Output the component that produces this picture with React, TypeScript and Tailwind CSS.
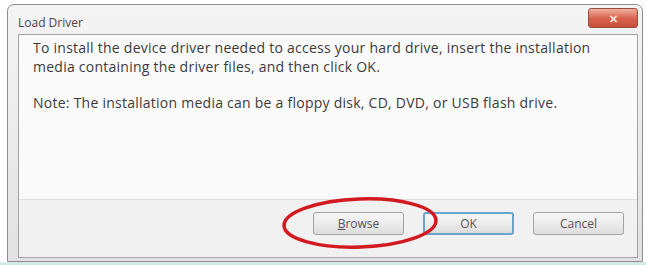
import React from 'react'

const font = { fontFamily: '"Open Sans", "Noto Sans", sans-serif' }

function DialogButton({ label, accel, primary }: { label: string; accel?: boolean; primary?: boolean }) {
    return (
        <button
            className={`w-[91px] h-[23px] rounded-[3px] text-[12px] text-[#555] bg-gradient-to-b from-[#f7f7f7] via-[#ececec] to-[#dcdcdc] ${primary ? 'border-2 border-[#6aa3cb]' : 'border border-[#a3a3a3]'}`}
        >
            {accel ? (
                <span><span className="underline">B</span>rowse</span>
            ) : (
                label
            )}
        </button>
    )
}

export default function App() {
    return (
        <div className="w-[646px] h-[265px] bg-white relative overflow-hidden" style={font}>
            {/* window frame */}
            <div className="ml-[7px] mt-[4px] w-[636px] h-[258px] border border-[#8d8d8d] rounded-t-[7px] bg-gradient-to-b from-[#f4f4f4] via-[#ebebeb] to-[#e2e2e2] flex flex-col">
                {/* title bar */}
                <div className="h-[29px] flex items-start justify-between pl-[10px] pr-[4px]">
                    <span className="mt-[11px] text-[12px] leading-[14px] text-[#4b4348]">Load Driver</span>
                    <div className="mt-[3px] w-[50px] h-[20px] rounded-[3px] border border-[#9b4a3e] bg-gradient-to-b from-[#eeb0a0] via-[#d8644f] to-[#c9503a] flex items-center justify-center">
                        <span className="text-[11px] leading-none font-bold text-[#f5e6e2]">✕</span>
                    </div>
                </div>

                {/* client area */}
                <div className="ml-[10px] mr-[4px] mb-[3px] flex-1 border border-[#a3a3a3] flex flex-col">
                    <div className="h-[164px] bg-[#fafafa] pl-[14px] pt-[3px] text-[14px] leading-[19px] tracking-[0.25px] text-[#3d3a3c]">
                        <p>To install the device driver needed to access your hard drive, insert the installation</p>
                        <p>media containing the driver files, and then click OK.</p>
                        <p className="mt-[17px]">Note: The installation media can be a floppy disk, CD, DVD, or USB flash drive.</p>
                    </div>
                    <div className="flex-1 border-t border-[#dedede] bg-[#f1f1f1] flex items-start justify-end gap-[19px] pt-[12px] pr-[13px]">
                        <DialogButton label="Browse" accel />
                        <DialogButton label="OK" primary />
                        <DialogButton label="Cancel" />
                    </div>
                </div>
            </div>
            <div className="h-[3px] bg-[#d3ebe6]" />

            {/* red highlight circle drawn over the Browse button */}
            <svg className="absolute left-[279px] top-[196px]" width="164" height="60" viewBox="0 0 164 60">
                <ellipse cx="81" cy="27" rx="76" ry="24" fill="none" stroke="#d21920" strokeWidth="3.5" transform="rotate(-2 81 27)" />
            </svg>
        </div>
    )
}
